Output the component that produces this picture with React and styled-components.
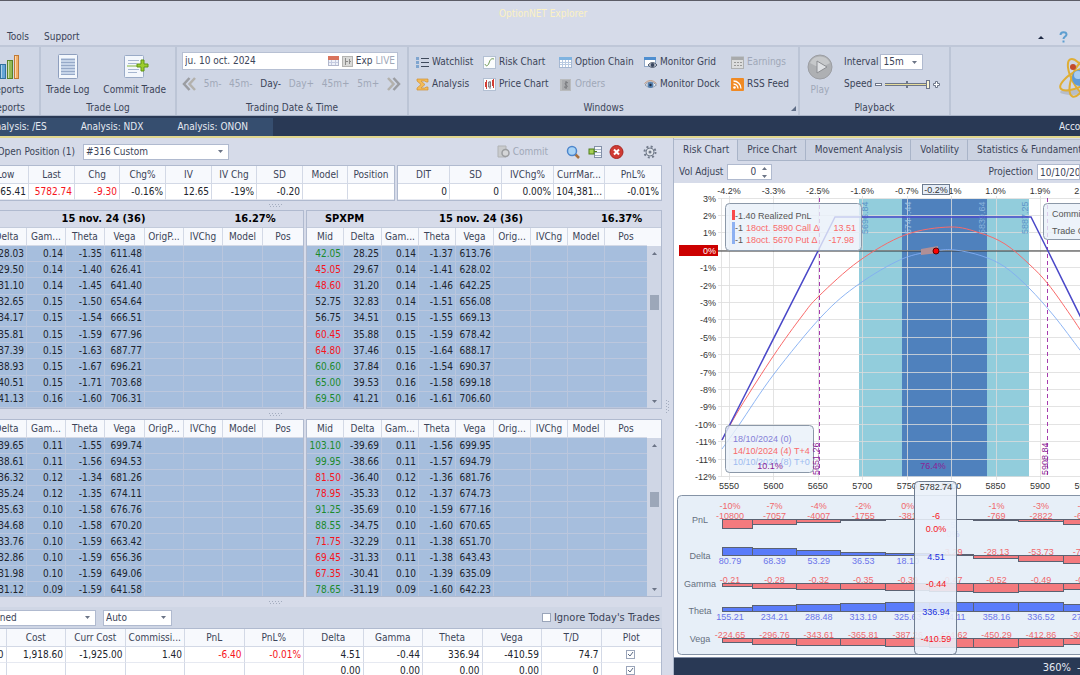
import React from "react";
import styled, { createGlobalStyle } from "styled-components";

const GlobalStyle = createGlobalStyle`
  * {
    box-sizing: border-box;
  }
  body {
    margin: 0;
    overflow: hidden;
    background: #d6dbe9;
    font-family: "DejaVu Sans Condensed", "Noto Sans", sans-serif;
    font-size: 10px;
    line-height: 14px;
    color: #3b4458;
  }
  button, input, select {
    font: inherit;
    color: inherit;
    margin: 0;
    padding: 0;
    border: none;
    background: none;
  }
`;

const Page = styled.div`
  display: flex;
  flex-direction: column;
  height: 100vh;
  overflow: hidden;
  white-space: nowrap;
`;

/* keeps the right end of its content in view when there is not enough room */
const LeftClip = styled.div`
  display: flex;
  flex: none;
  justify-content: flex-end;
  overflow: hidden;
  width: ${(props) => props.$width}px;
`;

/* ---------- title bar and menu ---------- */

const TitleBar = styled.header`
  flex: none;
  border-top: 1px solid #5c5c66;
  border-bottom: 2px solid #bfc7d8;
`;

const Title = styled.h1`
  margin: 0;
  padding: 6px 0 0 6px;
  height: 26px;
  text-align: center;
  font-size: 10px;
  font-weight: 400;
  color: #fbf1c3;
`;

const Menu = styled.nav`
  display: flex;
  align-items: center;
  gap: 15px;
  height: 18px;
  padding: 2px 12px 0 7px;
`;

const MenuButton = styled.button`
  display: flex;
  align-items: center;
`;

const Spacer = styled.div`
  flex: 1;
`;

/* ---------- ribbon ---------- */

const Ribbon = styled.div`
  display: flex;
  flex: none;
  height: 69px;
  background: #cfd6e5;
  border-bottom: 1px solid #a9b3c6;
`;

const Group = styled.section`
  display: flex;
  flex-direction: column;
  flex: none;
  width: ${(props) => props.$width}px;
  border-right: 2px solid #bcc5d6;
`;

const GroupBody = styled.div`
  display: flex;
  height: 54px;
  padding: ${(props) => props.$pad || "5px 5px 0"};
`;

const GroupLabel = styled.div`
  display: flex;
  justify-content: center;
  position: relative;
  height: 14px;
`;

const Launcher = styled.svg`
  position: absolute;
  right: 2px;
  bottom: 4px;
`;

const BigButton = styled.button`
  display: flex;
  flex-direction: column;
  align-items: center;
  flex: none;
  padding: 0 5px;
  color: ${(props) => (props.disabled ? "#a0a8b8" : "#3b4458")};
`;

const BigIcon = styled.span`
  display: flex;
  align-items: center;
  justify-content: center;
  height: 32px;
`;

const DateColumn = styled.div`
  display: flex;
  flex-direction: column;
  flex: 1;
`;

const DateRow = styled.div`
  display: flex;
  align-items: center;
  gap: 3px;
  height: 18px;
  width: 216px;
  padding: 0 2px;
  background: #fff;
  border: 1px solid #b7c0d3;
`;

const DateInput = styled.input`
  flex: 1;
  min-width: 0;
`;

const LiveButton = styled.button`
  color: ${(props) => (props.disabled ? "#a0a8b8" : "#3b4458")};
`;

const StepRow = styled.div`
  display: flex;
  align-items: center;
  justify-content: space-between;
  height: 27px;
  width: 219px;
`;

const StepButton = styled.button`
  display: flex;
  color: ${(props) => (props.disabled ? "#a0a8b8" : "#3b4458")};
`;

const WindowGrid = styled.div`
  display: grid;
  grid-template-columns: 67px 76px 85px 87px 66px;
  grid-template-rows: 22px 22px;
`;

const WindowButton = styled.button`
  display: flex;
  align-items: center;
  gap: 3px;
  color: ${(props) => (props.disabled ? "#a0a8b8" : "#3b4458")};
`;

const PlaybackRows = styled.div`
  display: flex;
  flex-direction: column;
  padding-left: 6px;
`;

const PlaybackRow = styled.div`
  display: flex;
  align-items: center;
  gap: ${(props) => props.$gap}px;
  height: 22px;
`;

const SpeedSlider = styled.input`
  appearance: none;
  width: 45px;
  height: 11px;
  background: linear-gradient(#6d7688, #6d7688) 0 4px / 100% 1px no-repeat,
    linear-gradient(#e6dc9b, #e6dc9b) 0 5px / 100% 1px no-repeat,
    linear-gradient(#6d7688, #6d7688) 0 6px / 100% 1px no-repeat,
    linear-gradient(#6d7688, #6d7688) 21px 2px / 2px 7px no-repeat;
  &::-webkit-slider-thumb {
    appearance: none;
    width: 4px;
    height: 9px;
    border: 1px solid #6d7688;
    background: #fbf6d3;
  }
`;

const LogoSlot = styled.div`
  flex: none;
  width: 22px;
  padding-top: 9px;
  overflow: hidden;
`;

/* ---------- select ---------- */

const SelectBox = styled.span`
  display: flex;
  align-items: center;
  flex: none;
  width: ${(props) => props.$width}px;
  height: 16px;
  background: #fff;
  border: 1px solid #b0bacf;
  svg {
    margin-left: -10px;
    pointer-events: none;
  }
`;

const SelectField = styled.select`
  appearance: none;
  width: 100%;
  padding: 0 14px 0 2px;
`;

const Select = ({ width, label, value }) => (
  <SelectBox $width={width}>
    <SelectField aria-label={label} defaultValue={value}>
      <option>{value}</option>
    </SelectField>
    <svg width="5" height="3">
      <path d="M0 0h5L2.500 3z" fill="#6b7486" />
    </svg>
  </SelectBox>
);

/* ---------- document tabs ---------- */

const DocumentBar = styled.nav`
  display: flex;
  align-items: flex-end;
  flex: none;
  height: 22px;
  background: #293955;
  border-bottom: 2px solid #e2d78d;
  color: #e6eaf2;
`;

const DocumentTab = styled.button`
  flex: none;
  height: 18px;
  padding: 0 25px 0 9px;
  background: #364e6f;
`;

const AccountButton = styled.button`
  width: 21px;
  height: 18px;
  overflow: hidden;
  text-align: left;
`;

/* ---------- workspace ---------- */

const Workspace = styled.main`
  display: flex;
  flex: 1;
  min-height: 0;
`;

const Positions = styled.section`
  display: flex;
  flex-direction: column;
  flex: none;
  width: 662px;
  overflow: hidden;
`;

const PositionBar = styled.div`
  display: flex;
  align-items: center;
  flex: none;
  height: 27px;
  gap: 8px;
`;

const ToolGroup = styled.div`
  display: flex;
  align-items: center;
  gap: 7px;
  padding-right: 5px;
`;

const ToolButton = styled.button`
  display: flex;
  align-items: center;
  gap: 3px;
  padding-right: ${(props) => props.$space || 0}px;
  color: ${(props) => (props.disabled ? "#a0a8b8" : "#3b4458")};
`;

const Splitter = styled.div`
  display: flex;
  align-items: center;
  justify-content: center;
  flex: none;
  height: ${(props) => props.$height || 10}px;
  padding-right: 112px;
`;

const PanelSplitter = styled.div`
  display: flex;
  align-items: center;
  justify-content: center;
  flex: none;
  width: 11px;
`;

const TablePair = styled.div`
  display: flex;
  flex: none;
  gap: 2px;
`;

const Frame = styled.div`
  display: flex;
  flex-direction: column;
  flex: none;
  width: ${(props) => props.$width}px;
  ${(props) => (props.$height ? `height: ${props.$height}px;` : "")}
  overflow: hidden;
  border: 1px solid #b0bacf;
  ${(props) => (props.$cut ? "border-left: none;" : "")}
  background: ${(props) => props.$bg || "#fff"};
`;

const Grid = styled.table`
  flex: none;
  width: ${(props) => props.$width}px;
  table-layout: fixed;
  border-collapse: separate;
  border-spacing: 0;
`;

const HeadCell = styled.th`
  height: 18px;
  padding: 0;
  overflow: hidden;
  text-align: center;
  font-weight: 400;
  background: #f7f9fd;
  border-right: 1px solid #d3d9e6;
  border-bottom: 1px solid #d3d9e6;
  &:last-child {
    border-right: none;
  }
`;

const Cell = styled.td`
  height: 16px;
  padding: 0 2px 0 0;
  overflow: hidden;
  text-align: right;
  color: ${(props) => props.$color || "#20242c"};
  background: ${(props) => (props.$picked ? "#a6bedd" : "#fff")};
  border-right: 1px solid ${(props) => (props.$picked ? "#b9c6dd" : "#d3d9e6")};
  border-bottom: 1px solid ${(props) => (props.$picked ? "#bcc7dd" : "#e6e9f1")};
  &:last-child {
    border-right: none;
  }
`;

const ExpiryTitle = styled.div`
  display: grid;
  grid-template-columns: ${(props) => props.$columns};
  align-items: center;
  flex: none;
  height: 17px;
  font-size: 11px;
  font-weight: 700;
  text-align: center;
  color: #000;
  background: #d6dbe9;
  border-bottom: 1px solid #c3cbdb;
`;

const GridBody = styled.div`
  display: flex;
  justify-content: ${(props) => (props.$cut ? "flex-end" : "flex-start")};
  flex: 1;
  min-height: 0;
`;

const ScrollTrack = styled.div`
  display: flex;
  flex-direction: column;
  align-items: center;
  flex: 1;
  background: #cfd6e5;
`;

const ScrollHead = styled.div`
  width: 100%;
  height: 18px;
  background: #f7f9fd;
`;

const ScrollRoom = styled.div`
  flex: ${(props) => props.$grow};
`;

const ScrollThumb = styled.div`
  width: 9px;
  height: 15px;
  background: #9ca7b9;
`;

const ArrowSlot = styled.div`
  display: flex;
  align-items: center;
  height: 14px;
`;

const SummaryBar = styled.div`
  display: flex;
  align-items: center;
  gap: 7px;
  flex: none;
  height: 21px;
  padding-right: 2px;
  background: #cfd6e5;
`;

const CheckLabel = styled.label`
  display: flex;
  align-items: center;
  gap: 3px;
  font-size: 11px;
`;

const CheckBox = styled.input`
  appearance: none;
  flex: none;
  width: 9px;
  height: 9px;
  background: #fff;
  border: 1px solid #9aa5ba;
  vertical-align: middle;
`;

const PlotCheck = styled.span`
  display: flex;
  justify-content: center;
  align-items: center;
  svg {
    width: 7px;
    margin-left: -8px;
    pointer-events: none;
  }
`;

/* ---------- risk panel ---------- */

const RiskPanel = styled.section`
  display: flex;
  flex-direction: column;
  flex: 1;
  min-width: 0;
  overflow: hidden;
  border-left: 1px solid #aab5c9;
`;

const TabList = styled.div`
  display: flex;
  flex: none;
  height: 23px;
  padding-top: 1px;
`;

const ChartTab = styled.button`
  flex: none;
  padding: 0 8px 0 9px;
  background: ${(props) => (props.$active ? "#d6dbe9" : "#cbd2e1")};
  border-right: 1px solid #a9b4c8;
  border-top: 1px solid #b7c0d2;
  border-bottom: 1px solid ${(props) => (props.$active ? "#d6dbe9" : "#a9b4c8")};
`;

const RiskBar = styled.div`
  display: flex;
  align-items: center;
  flex: none;
  gap: 4px;
  height: 22px;
  padding-left: 5px;
`;

const Spin = styled.span`
  display: flex;
  align-items: center;
  justify-content: space-between;
  width: 45px;
  height: 16px;
  padding-right: 4px;
  background: #fff;
  border: 1px solid #b0bacf;
`;

const SpinInput = styled.input`
  width: 28px;
  text-align: right;
`;

const ProjectionInput = styled.input`
  width: 43px;
  height: 16px;
  padding-left: 2px;
  background: #fff;
  border: 1px solid #b0bacf;
`;

const ChartArea = styled.div`
  flex: 1;
  min-height: 0;
  overflow: hidden;
  background: #fff;
`;

const ChartSvg = styled.svg`
  display: block;
  width: 100%;
  height: 100%;
  font-family: "Liberation Sans", Arial, sans-serif;
  font-size: 9px;
`;

const StatusBar = styled.footer`
  display: flex;
  align-items: center;
  justify-content: flex-end;
  flex: none;
  gap: 6px;
  height: 18px;
  padding-top: 2px;
  color: #e6eaf2;
  background: #293955;
  border-top: 1px solid #8390a8;
  font-size: 11px;
`;

const ZoomOut = styled.button`
  width: 3px;
  overflow: hidden;
`;

/* ---------- icons ---------- */

const PageIcon = ({ children }) => (
  <svg width="28" height="28">
    <rect x="4.500" y="1.500" width="19" height="24" rx="1" fill="#f3f7fc" stroke="#8e9fbe" />
    <rect x="7" y="5" width="14" height="17" fill="#c6d4e8" />
    <path d="M7 6.500h14M7 9.500h14M7 12.500h14M7 15.500h14M7 18.500h14M7 21.500h14" stroke="#96a9c8" />
    {children}
  </svg>
);

const CommitTradeIcon = () => (
  <svg width="28" height="28">
    <rect x="3.500" y="2.500" width="19" height="22" rx="1" fill="#f3f7fc" stroke="#9aabc7" />
    <path d="M7 7.500h11M7 10.500h9M7 16.500h11M7 19.500h9" stroke="#a6b6d0" />
    <path d="M6 13h11" stroke="#85b83a" />
    <path d="M20 7h3v4h4v3h-4v4h-3v-4h-4v-3h4z" fill="#9ccc2c" stroke="#5f9417" />
  </svg>
);

const BarsIcon = () => (
  <svg width="34" height="26">
    <rect x="1.500" y="13.500" width="5" height="11" fill="#d8574a" stroke="#a33b32" />
    <rect x="10.500" y="10.500" width="5" height="14" fill="#63a5d6" stroke="#32729f" />
    <rect x="17.500" y="6.500" width="5" height="18" fill="#93b956" stroke="#58822b" />
    <rect x="24.500" y="1.500" width="4" height="23" fill="#f4b26b" stroke="#c07a35" />
    <path d="M11.500 11v13M18.500 7v17M25.500 2v22" stroke="#fff" strokeOpacity=".5" />
  </svg>
);

const PlayIcon = () => (
  <svg width="26" height="26">
    <circle cx="13" cy="13" r="12" fill="#aeb0b3" stroke="#9c9ea3" />
    <path d="M3 9a11 11 0 0 1 20 0q-10 7-20 0z" fill="#c6c8ca" />
    <path d="M10 7l10 6-10 6z" fill="#dfe1e4" stroke="#8c8e92" />
  </svg>
);

const ChevronsIcon = ({ flip }) => (
  <svg width="14" height="14" viewBox="0 0 14 14">
    <g
      fill="none"
      stroke="#9b9da2"
      strokeWidth="2.500"
      transform={flip ? "matrix(-1 0 0 1 14 0)" : undefined}
    >
      <path d="M7.500 1L2 7l5.500 6" />
      <path d="M13 1L7.500 7 13 13" stroke="#b3b1ac" />
    </g>
  </svg>
);

const CalendarIcon = () => (
  <svg width="11" height="10">
    <rect x=".5" y=".5" width="10" height="9" fill="#eef1f8" stroke="#b1b7cc" />
    <path d="M0 0h11v4H0z" fill="#d9735c" />
    <path d="M1 6.500h9M3.500 4v5M7.500 4v5" stroke="#c5cbe0" />
  </svg>
);

const SessionIcon = () => (
  <svg width="11" height="11">
    <rect x=".5" y=".5" width="10" height="10" fill="#d9d9d7" stroke="#b4b4b2" />
    <path d="M3.500 2v7M3.500 5.500H6M7.500 3v5M7 5.500h2" stroke="#8c8c8a" />
  </svg>
);

const drawings = {
  list: (
    <>
      <path d="M0 1h3v3H0zM0 5h3v3H0zM0 9h3v3H0z" fill="#7fa5cf" />
      <path d="M5 2.500h8M5 6.500h8M5 10.500h8" stroke="#3f4a5c" />
    </>
  ),
  sigma: (
    <path
      d="M1 1h11v3h-2l-1-1H5l4 3.500L5 10h4l1-1h2v3H1v-2l4-3.500L1 3z"
      fill="#f3bb55"
      stroke="#cf8f35"
      strokeWidth=".7"
    />
  ),
  risk: (
    <>
      <rect x=".5" y=".5" width="12" height="12" fill="#fbfcfd" stroke="#b3c0d3" />
      <path d="M2 8c1 3 3 2 4-1s2-5 5-4" fill="none" stroke="#6f9a58" />
    </>
  ),
  price: (
    <>
      <rect x=".5" y=".5" width="12" height="12" fill="#fbfcfd" stroke="#b3c0d3" />
      <path d="M2 4h2v5H2zM9 2h2v6H9z" fill="#d23d34" />
      <path d="M3.500 2v9M10.500 1v9" stroke="#d23d34" />
      <path d="M5.500 4h2v5h-2zM7 3v8" fill="#fff" stroke="#6b6b70" strokeWidth=".8" />
    </>
  ),
  chain: (
    <>
      <rect x=".5" y="1.500" width="12" height="10" fill="#fff" stroke="#a6b8d2" />
      <path d="M0 1h13v3H0z" fill="#7fb3e0" />
      <path d="M1 6.500h11M1 8.500h11M3.500 4v7M6.500 4v7M9.500 4v7" stroke="#b9cbe2" />
    </>
  ),
  orders: (
    <>
      <path d="M1 1h11v12H1z" fill="#b9bbbd" />
      <path d="M3 2h8v10H3z" fill="#a9abae" />
      <path d="M9 5C7 3 5 6 7 7s2 3-2 2M7 3v8" fill="none" stroke="#77797c" />
    </>
  ),
  monitor: (
    <>
      <rect x=".5" y="1.500" width="11" height="9" fill="#fff" stroke="#8fa7c6" />
      <path d="M0 1h12v3H0z" fill="#4f8fd0" />
      <path d="M4 9q4.500-5 9 0-4.500 5-9 0z" fill="#d6dce6" stroke="#4a5568" />
      <circle cx="8.500" cy="9" r="2" fill="#39465f" />
    </>
  ),
  eye: (
    <>
      <path d="M1 7q5.500-6 11.500 0Q6.500 12 1 7z" fill="#eff3f8" stroke="#8d97a7" />
      <path d="M.5 5.500q6-6 12 0" fill="none" stroke="#c29473" />
      <circle cx="6.500" cy="7" r="3" fill="#5480b0" />
      <circle cx="6.500" cy="7" r="1.200" fill="#1d2a3e" />
    </>
  ),
  earnings: (
    <>
      <rect x=".5" y="1" width="12" height="11.500" fill="#dcdddd" stroke="#aeb0b1" />
      <path d="M1 1h11v3H1z" fill="#a8aaab" />
      <path d="M3 6.500h8M3 9.500h8" stroke="#999" strokeDasharray="2 1" />
    </>
  ),
  rss: (
    <>
      <rect width="13" height="13" rx="1" fill="#f08a24" />
      <circle cx="3.500" cy="9.500" r="1.300" fill="#fff" />
      <path d="M2.500 6a4.500 4.500 0 0 1 4.500 4.500M2.500 3a7.500 7.500 0 0 1 7.500 7.500" fill="none" stroke="#fff" strokeWidth="1.300" />
    </>
  ),
};

const WindowIcon = ({ name }) => (
  <svg width="13" height="13" viewBox="0 0 13 13">
    {drawings[name]}
  </svg>
);

const AtomLogo = () => (
  <svg width="50" height="44">
    <ellipse cx="14" cy="36" rx="12" ry="3" fill="#b7bdc9" />
    <g fill="none" stroke="#dfae35" strokeWidth="2">
      <ellipse cx="22" cy="22" rx="8" ry="21" transform="rotate(-28 22 22)" />
      <ellipse cx="22" cy="22" rx="8" ry="22" transform="rotate(62 22 22)" />
      <ellipse cx="22" cy="22" rx="8" ry="20" transform="rotate(22 22 22)" />
    </g>
    <circle cx="22" cy="22" r="8" fill="#5d9bd8" />
    <circle cx="20" cy="19" r="4" fill="#a9cdf0" />
    <circle cx="15" cy="11" r="3" fill="#c34a2b" />
  </svg>
);

const Dots = ({ vertical }) => (
  <svg width={vertical ? 5 : 13} height={vertical ? 13 : 5}>
    <path
      d={vertical ? "M1.500 0v13M3.500 1v12" : "M0 1.500h13M1 3.500h12"}
      stroke="#a4adbf"
      strokeDasharray="1 2"
    />
  </svg>
);

/* ---------- data ---------- */

const RED = "#f6141c";
const GREEN = "#1c8a2c";

const windowButtons = [
  ["list", "Watchlist"],
  ["risk", "Risk Chart"],
  ["chain", "Option Chain"],
  ["monitor", "Monitor Grid"],
  ["earnings", "Earnings", true],
  ["sigma", "Analysis"],
  ["price", "Price Chart"],
  ["orders", "Orders", true],
  ["eye", "Monitor Dock"],
  ["rss", "RSS Feed"],
];

const leftColumns = [
  ["Delta", 40],
  ["Gam...", 39],
  ["Theta", 39],
  ["Vega", 40],
  ["OrigP...", 39],
  ["IVChg", 39],
  ["Model", 40],
  ["Pos", 40],
];

const rightColumns = [
  ["Mid", 37],
  ["Delta", 38],
  ["Gam...", 37],
  ["Theta", 37],
  ["Vega", 38],
  ["Orig...", 37],
  ["IVChg", 37],
  ["Model", 37],
  ["Pos", 42],
];

const callsLeft = [
  ["28.03", "0.14", "-1.35", "611.48"],
  ["29.50", "0.14", "-1.40", "626.41"],
  ["31.10", "0.14", "-1.45", "641.40"],
  ["32.65", "0.15", "-1.50", "654.64"],
  ["34.17", "0.15", "-1.54", "666.51"],
  ["35.81", "0.15", "-1.59", "677.96"],
  ["37.39", "0.15", "-1.63", "687.77"],
  ["38.93", "0.15", "-1.67", "696.21"],
  ["40.51", "0.15", "-1.71", "703.68"],
  ["41.13", "0.16", "-1.60", "706.31"],
];

const callsRight = [
  ["42.05", "28.25", "0.14", "-1.37", "613.76", GREEN],
  ["45.05", "29.67", "0.14", "-1.41", "628.02", RED],
  ["48.60", "31.20", "0.14", "-1.46", "642.25", RED],
  ["52.75", "32.83", "0.14", "-1.51", "656.08"],
  ["56.75", "34.51", "0.15", "-1.55", "669.13"],
  ["60.45", "35.88", "0.15", "-1.59", "678.42", RED],
  ["64.80", "37.46", "0.15", "-1.64", "688.17", RED],
  ["60.60", "37.84", "0.16", "-1.54", "690.37", GREEN],
  ["65.00", "39.53", "0.16", "-1.58", "699.18", GREEN],
  ["69.50", "41.21", "0.16", "-1.61", "706.60", GREEN],
];

const putsLeft = [
  ["-39.65", "0.11", "-1.55", "699.74"],
  ["-38.61", "0.11", "-1.56", "694.53"],
  ["-36.32", "0.12", "-1.34", "681.26"],
  ["-35.24", "0.12", "-1.35", "674.11"],
  ["-35.63", "0.10", "-1.58", "676.76"],
  ["-34.68", "0.10", "-1.58", "670.20"],
  ["-33.76", "0.10", "-1.59", "663.42"],
  ["-32.86", "0.10", "-1.59", "656.36"],
  ["-31.98", "0.10", "-1.59", "649.06"],
  ["-31.12", "0.09", "-1.59", "641.58"],
];

const putsRight = [
  ["103.10", "-39.69", "0.11", "-1.56", "699.95", GREEN],
  ["99.95", "-38.66", "0.11", "-1.57", "694.79", GREEN],
  ["81.50", "-36.40", "0.12", "-1.36", "681.76", RED],
  ["78.95", "-35.33", "0.12", "-1.37", "674.73", RED],
  ["91.25", "-35.69", "0.10", "-1.59", "677.16", GREEN],
  ["88.55", "-34.75", "0.10", "-1.60", "670.65", GREEN],
  ["71.75", "-32.29", "0.11", "-1.38", "651.70", RED],
  ["69.45", "-31.33", "0.11", "-1.38", "643.43", RED],
  ["67.35", "-30.41", "0.10", "-1.39", "635.09", RED],
  ["78.65", "-31.19", "0.09", "-1.60", "642.23", GREEN],
];

const quoteColumns = [
  ["Low", 46, "5765.41"],
  ["Last", 46, "5782.74", RED],
  ["Chg", 45, "-9.30", RED],
  ["Chg%", 46, "-0.16%"],
  ["IV", 46, "12.65"],
  ["IV Chg", 45, "-19%"],
  ["SD", 46, "-0.20"],
  ["Model", 45, ""],
  ["Position", 46, ""],
];

const tradeColumns = [
  ["DIT", 52, "0"],
  ["SD", 52, "0"],
  ["IVChg%", 52, "0.00%"],
  ["CurrMar...", 51, "104,381..."],
  ["PnL%", 56, "-0.01%"],
];

const summaryHeads = [
  "Open",
  "Cost",
  "Curr Cost",
  "Commissi...",
  "PnL",
  "PnL%",
  "Delta",
  "Gamma",
  "Theta",
  "Vega",
  "T/D",
];

const summaryRows = [
  ["0.00", "1,918.60", "-1,925.00", "1.40", "-6.40", "-0.01%", "4.51", "-0.44", "336.94", "-410.59", "74.7"],
  ["", "", "", "", "", "", "0.00", "0.00", "0.00", "0.00", "0"],
];

const priceTicks = [5550, 5600, 5650, 5700, 5750, 5800, 5850, 5900, 5950];
const moveTicks = ["-4.2%", "-3.3%", "-2.5%", "-1.6%", "-0.7%", "0.1%", "1.0%", "1.9%", "2.8%"];
const pnlTicks = [3, 2, 1, 0, -1, -2, -3, -4, -5, -6, -7, -8, -9, -10, -11, -11, -12];

const nextExpiry = [
  [48, 257], [66, 225], [100, 172], [128, 133], [145, 113], [185, 78],
  [231, 52], [276, 44], [306, 50], [331, 61], [355, 81], [374, 101],
  [397, 133], [420, 168],
];
const today = [
  [48, 266], [65, 242], [100, 191], [148, 133], [185, 101], [228, 76],
  [261, 68], [281, 67], [308, 73], [331, 84], [355, 105], [380, 133],
  [406, 167], [420, 185],
];

const greeks = [
  {
    name: "PnL",
    base: 336,
    labelY: 340,
    textY: 336,
    bars: [9, 5, 3, 1, 0, 0, 1, 2, 5],
    values: ["-10800", "-7057", "-4007", "-1755", "-381", "", "-769", "-2822", "-6120"],
  },
  {
    name: "Delta",
    base: 372,
    labelY: 376,
    textY: 381,
    bars: [-8, -7, -5, -3, -2, -1, 3, 6, 8],
    values: ["80.79", "68.39", "53.29", "36.53", "18.10", "-3.29", "-28.13", "-53.73", "-76.40"],
  },
  {
    name: "Gamma",
    base: 400,
    labelY: 404,
    textY: 400,
    bars: [3, 5, 6, 6, 7, 8, 9, 8, 6],
    values: ["-0.21", "-0.28", "-0.32", "-0.35", "-0.39", "-0.47", "-0.52", "-0.49", "-0.41"],
  },
  {
    name: "Theta",
    base: 428,
    labelY: 431,
    textY: 437,
    bars: [-4, -6, -7, -8, -9, -9, -9, -9, -7],
    values: ["155.21", "234.21", "288.48", "313.19", "325.63", "344.11", "358.16", "336.52", "278.20"],
  },
  {
    name: "Vega",
    base: 455,
    labelY: 459,
    textY: 455,
    bars: [4, 6, 7, 7, 8, 9, 9, 8, 6],
    values: ["-224.65", "-296.76", "-343.61", "-365.81", "-387.26", "-424.62", "-450.29", "-412.86", "-305.10"],
  },
];
const pnlPercents = ["-10%", "-7%", "-4%", "-2%", "0%", "", "-1%", "-3%", "-6%"];
const barEdges = [48, 78, 122, 166, 211, 255, 299, 344, 389, 433];

const priceX = (price) => 55 + ((price - 5550) * 311) / 350;
const pnlY = (index) => 15.5 + index * 17.4;

/* smooth line through the points (Catmull-Rom as cubic beziers) */
const curve = (points) => {
  let d = `M${points[0].join(" ")}`;
  for (let i = 0; i < points.length - 1; i++) {
    const p0 = points[i - 1] || points[i];
    const p1 = points[i];
    const p2 = points[i + 1];
    const p3 = points[i + 2] || p2;
    d += `C${p1[0] + (p2[0] - p0[0]) / 6} ${p1[1] + (p2[1] - p0[1]) / 6} ${
      p2[0] - (p3[0] - p1[0]) / 6
    } ${p2[1] - (p3[1] - p1[1]) / 6} ${p2[0]} ${p2[1]}`;
  }
  return d;
};

/* ---------- parts ---------- */

const FactTable = ({ width, columns, cut }) => {
  const total = columns.reduce((sum, column) => sum + column[1], 0);
  return (
    <Frame $width={width} $cut={cut}>
      <GridBody $cut={cut}>
        <Grid $width={total}>
          <colgroup>
            {columns.map((column) => (
              <col key={column[0]} width={column[1]} />
            ))}
          </colgroup>
          <thead>
            <tr>
              {columns.map((column) => (
                <HeadCell key={column[0]}>{column[0]}</HeadCell>
              ))}
            </tr>
          </thead>
          <tbody>
            <tr>
              {columns.map((column) => (
                <Cell key={column[0]} $color={column[3]}>
                  {column[2]}
                </Cell>
              ))}
            </tr>
          </tbody>
        </Grid>
      </GridBody>
    </Frame>
  );
};

const StrikeGrid = ({ columns, rows }) => {
  const total = columns.reduce((sum, column) => sum + column[1], 0);
  return (
    <Grid $width={total}>
      <colgroup>
        {columns.map((column) => (
          <col key={column[0]} width={column[1]} />
        ))}
      </colgroup>
      <thead>
        <tr>
          {columns.map((column) => (
            <HeadCell key={column[0]}>{column[0]}</HeadCell>
          ))}
        </tr>
      </thead>
      <tbody>
        {rows.map((row, r) => (
          <tr key={r}>
            {columns.map((column, c) => (
              <Cell key={column[0]} $picked $color={c === 0 ? row[5] : undefined}>
                {c < 5 ? row[c] : ""}
              </Cell>
            ))}
          </tr>
        ))}
      </tbody>
    </Grid>
  );
};

const Scroll = ({ before, after }) => (
  <ScrollTrack>
    <ScrollHead />
    <ArrowSlot>
      <svg width="5" height="3">
        <path d="M0 3h5L2.500 0z" fill="#6b7486" />
      </svg>
    </ArrowSlot>
    <ScrollRoom $grow={before} />
    <ScrollThumb />
    <ScrollRoom $grow={after} />
    <ArrowSlot>
      <svg width="5" height="3">
        <path d="M0 0h5L2.500 3z" fill="#6b7486" />
      </svg>
    </ArrowSlot>
  </ScrollTrack>
);

const RibbonBar = () => (
  <Ribbon>
    <Group $width={41}>
      <LeftClip $width={39}>
        <GroupBody $pad="4px 10px 0 0">
          <BigButton>
            <BigIcon>
              <BarsIcon />
            </BigIcon>
            Reports
          </BigButton>
        </GroupBody>
      </LeftClip>
      <LeftClip $width={25}>Reports</LeftClip>
    </Group>
    <Group $width={136}>
      <GroupBody $pad="4px 0 0">
        <BigButton>
          <BigIcon>
            <PageIcon />
          </BigIcon>
          Trade Log
        </BigButton>
        <Spacer />
        <BigButton>
          <BigIcon>
            <CommitTradeIcon />
          </BigIcon>
          Commit Trade
        </BigButton>
        <Spacer />
      </GroupBody>
      <GroupLabel>Trade Log</GroupLabel>
    </Group>
    <Group $width={232}>
      <GroupBody>
        <DateColumn>
          <DateRow>
            <DateInput aria-label="Trading date" defaultValue="ju. 10 oct. 2024" />
            <CalendarIcon />
            <SessionIcon />
            <LiveButton>Exp</LiveButton>
            <LiveButton disabled>LIVE</LiveButton>
          </DateRow>
          <StepRow>
            <StepButton aria-label="Back">
              <ChevronsIcon />
            </StepButton>
            <StepButton disabled>5m-</StepButton>
            <StepButton disabled>45m-</StepButton>
            <StepButton>Day-</StepButton>
            <StepButton disabled>Day+</StepButton>
            <StepButton disabled>45m+</StepButton>
            <StepButton disabled>5m+</StepButton>
            <StepButton aria-label="Forward">
              <ChevronsIcon flip />
            </StepButton>
          </StepRow>
        </DateColumn>
      </GroupBody>
      <GroupLabel>Trading Date &amp; Time</GroupLabel>
    </Group>
    <Group $width={391}>
      <GroupBody $pad="4px 7px 0">
        <WindowGrid>
          {windowButtons.map(([icon, label, disabled]) => (
            <WindowButton key={label} disabled={disabled}>
              <WindowIcon name={icon} />
              {label}
            </WindowButton>
          ))}
        </WindowGrid>
      </GroupBody>
      <GroupLabel>
        Windows
        <Launcher width="5" height="5">
          <path d="M5 0v5H0z" fill="#5f6d86" />
        </Launcher>
      </GroupLabel>
    </Group>
    <Group $width={151}>
      <GroupBody $pad="4px 2px 0">
        <BigButton disabled>
          <BigIcon>
            <PlayIcon />
          </BigIcon>
          Play
        </BigButton>
        <PlaybackRows>
          <PlaybackRow $gap={2}>
            Interval
            <Select width={43} label="Interval" value="15m" />
          </PlaybackRow>
          <PlaybackRow $gap={3}>
            <label htmlFor="speed">Speed</label>
            <svg width="7" height="3">
              <rect x=".5" y=".5" width="6" height="2" fill="#fff" stroke="#6d7688" />
            </svg>
            <SpeedSlider id="speed" type="range" defaultValue="100" />
            <svg width="7" height="7">
              <path
                d="M2.500.5h2v2h2v2h-2v2h-2v-2h-2v-2h2z"
                fill="#fff"
                stroke="#6d7688"
              />
            </svg>
          </PlaybackRow>
        </PlaybackRows>
      </GroupBody>
      <GroupLabel>Playback</GroupLabel>
    </Group>
    <Spacer />
    <LogoSlot>
      <AtomLogo />
    </LogoSlot>
  </Ribbon>
);

const PositionTools = () => (
  <ToolGroup>
    <ToolButton disabled $space={11}>
      <svg width="13" height="13">
        <path d="M1 1h8v11H1z" fill="#c9cbcd" stroke="#b1b3b5" />
        <circle cx="8.500" cy="8" r="3.500" fill="#d5d6d8" stroke="#9b9da0" strokeWidth="1.500" />
      </svg>
      Commit
    </ToolButton>
    <ToolButton aria-label="Search">
      <svg width="15" height="14">
        <path d="M9 9l4 4" stroke="#a8703d" strokeWidth="2.500" />
        <circle cx="6" cy="6" r="4.500" fill="#a9d3f5" stroke="#4d86cc" strokeWidth="1.500" />
      </svg>
    </ToolButton>
    <ToolButton aria-label="Layout">
      <svg width="14" height="12">
        <rect x="6.500" y=".5" width="7" height="11" fill="#f4f7fb" stroke="#8390a8" />
        <path d="M7 3.500h6M7 6.500h6M7 9.500h6" stroke="#a5b1c6" />
        <rect x="1" y="3" width="5" height="5" fill="#a6cf52" stroke="#4f7f1c" />
        <path d="M6 5.500h3" stroke="#4f7f1c" />
      </svg>
    </ToolButton>
    <ToolButton aria-label="Close position" $space={12}>
      <svg width="15" height="14">
        <circle cx="7.500" cy="7" r="6.500" fill="#cf3a33" stroke="#a92721" />
        <path d="M5 4.500l5 5M10 4.500l-5 5" stroke="#fff" strokeWidth="2" />
      </svg>
    </ToolButton>
    <ToolButton aria-label="Settings">
      <svg width="14" height="14">
        <circle cx="7" cy="7" r="5.500" fill="none" stroke="#727b8b" strokeWidth="2" strokeDasharray="2 2.320" />
        <circle cx="7" cy="7" r="4" fill="#dfe3ea" stroke="#727b8b" />
        <circle cx="7" cy="7" r="1.500" fill="#727b8b" />
      </svg>
    </ToolButton>
  </ToolGroup>
);

const SummaryTable = () => (
  <Frame $width={662} $cut>
    <GridBody $cut>
      <Grid $width={714}>
        <thead>
          <tr>
            {summaryHeads.map((head) => (
              <HeadCell key={head}>{head}</HeadCell>
            ))}
            <HeadCell>Plot</HeadCell>
          </tr>
        </thead>
        <tbody>
          {summaryRows.map((row, r) => (
            <tr key={r}>
              {row.map((value, c) => (
                <Cell key={c} $color={c === 4 || c === 5 ? RED : undefined}>
                  {value}
                </Cell>
              ))}
              <Cell>
                <PlotCheck>
                  <CheckBox type="checkbox" defaultChecked aria-label="Plot" />
                  <svg viewBox="0 0 7 7" height="7">
                    <path d="M1 3l2 2 3-4" fill="none" stroke="#5d6b84" />
                  </svg>
                </PlotCheck>
              </Cell>
            </tr>
          ))}
        </tbody>
      </Grid>
    </GridBody>
  </Frame>
);

const GreekRow = ({ greek }) => (
  <g>
    <text x="26" y={greek.labelY} textAnchor="middle" fill="#66707f">
      {greek.name}
    </text>
    {greek.bars.map((height, i) =>
      height === 0 ? null : (
        <rect
          key={i}
          x={barEdges[i] + 0.5}
          y={greek.base + 0.5 + Math.min(height, 0)}
          width={barEdges[i + 1] - barEdges[i]}
          height={Math.abs(height)}
          fill={height > 0 ? "#f47a7e" : "#5a7cfa"}
          stroke="#5b6272"
        />
      )
    )}
    <path d={`M48 ${greek.base + 0.5}H1000`} stroke="#5b6272" />
    {greek.values.map((value, i) => (
      <text
        key={i}
        x={priceX(priceTicks[i]) + 1}
        y={value.startsWith("-") ? greek.base : greek.textY}
        textAnchor="middle"
        fill={value.startsWith("-") ? "#f0686c" : "#6a74ea"}
      >
        {value}
      </text>
    ))}
  </g>
);

const RiskChart = () => (
  <ChartSvg>
    <rect x="185" y="16" width="170" height="278" fill="#92cddc" />
    <rect x="228" y="16" width="85" height="278" fill="#4f81bd" />
    <g stroke="#dcdcdc" strokeOpacity=".8">
      {priceTicks.map((tick) => (
        <path key={tick} d={`M${Math.round(priceX(tick)) + 0.5} 13V297`} />
      ))}
      {pnlTicks.map((tick, i) => (
        <path key={i} d={`M44 ${Math.round(pnlY(i)) - 0.5}H1000`} />
      ))}
      <path d="M47.500 15v279" />
    </g>
    <g fill="#333" textAnchor="middle">
      {priceTicks.map((tick, i) => (
        <g key={tick}>
          <text x={priceX(tick)} y="11">
            {moveTicks[i]}
          </text>
          <text x={priceX(tick)} y="306">
            {tick}
          </text>
        </g>
      ))}
    </g>
    <rect x="5" y="62" width="39" height="11" fill="#c00" />
    <g textAnchor="end">
      {pnlTicks.map((tick, i) => (
        <text key={i} x="42" y={pnlY(i) + 3} fill={tick === 0 ? "#fff" : "#333"}>
          {tick}%
        </text>
      ))}
    </g>
    <path d="M44 68H1000" stroke="#333" />
    <g stroke="#a63cae" strokeDasharray="4 3">
      <path d="M145.500 15v279M373.500 15v279" />
    </g>
    <g fill="#5b94c8">
      <text transform="translate(194 51) rotate(-90)">5696.84</text>
      <text transform="translate(237 51) rotate(-90)" fill="#9cc3e4">5744.44</text>
      <text transform="translate(311 51) rotate(-90)" fill="#8ab4dc">5839.64</text>
      <text transform="translate(354 51) rotate(-90)">5887.25</text>
    </g>
    <path d={curve(today)} fill="none" stroke="#82adf2" strokeOpacity=".9" />
    <path d={curve(nextExpiry)} fill="none" stroke="#f96a6a" />
    <path d="M48 257L144 68l17-34h196l17 34 46 93" fill="none" stroke="#4a48c8" strokeWidth="1.500" />
    <path d="M247 66l17-3v7l-17 2z" fill="#b08f96" />
    <circle cx="262" cy="68" r="3" fill="#f00" stroke="#5c0000" />

    <g fill="#e9f0f9" fillOpacity=".8" stroke="#8b98a8">
      <rect x="51.500" y="20.500" width="136" height="47" rx="4" />
      <rect x="51.500" y="242.500" width="88" height="47" rx="4" />
      <rect x="369.500" y="20.500" width="120" height="36" rx="4" />
    </g>
    <path d="M58 27h3v10h-3z" fill="#fa4a4a" />
    <path d="M58 39h3v22h-3z" fill="#8db1f2" />
    <text x="61" y="36" fill="#555">-1.40 Realized PnL</text>
    <text x="61" y="48" fill="#555">-1</text>
    <text x="72" y="48" fill="#f96a6a">18oct. 5890 Call Δ</text>
    <text x="182" y="48" textAnchor="end" fill="#f96a6a">13.51</text>
    <text x="61" y="60" fill="#555">-1</text>
    <text x="72" y="60" fill="#f96a6a">18oct. 5670 Put Δ</text>
    <text x="180" y="60" textAnchor="end" fill="#f96a6a">-17.98</text>
    <text x="59" y="259" fill="#8580d8">18/10/2024 (0)</text>
    <text x="59" y="271" fill="#f96a6a">14/10/2024 (4) T+4</text>
    <text x="59" y="282" fill="#9dbbf0">10/10/2024 (8) T+0</text>
    <text x="378" y="34" fill="#555">Commissions</text>
    <text x="378" y="51" fill="#555">Trade Costs</text>
    <g fill="#8b1f96">
      <text x="96" y="286" textAnchor="middle">10.1%</text>
      <text x="259" y="286" textAnchor="middle">76.4%</text>
      <text transform="translate(145 292) rotate(-90)">5651.26</text>
      <text transform="translate(374 292) rotate(-90)">5908.84</text>
    </g>
    <rect x="248.500" y="1.500" width="27" height="10" fill="#e6edf7" stroke="#6e7c90" />
    <text x="262" y="10" textAnchor="middle" fill="#333">-0.2%</text>

    <rect x="3.500" y="312.500" width="1000" height="159" rx="4" fill="#e7eff8" stroke="#8593a6" />
    {pnlPercents.map((value, i) => (
      <text key={i} x={priceX(priceTicks[i]) + 1} y="326" textAnchor="middle" fill="#f0686c">
        {value}
      </text>
    ))}
    {greeks.map((greek) => (
      <GreekRow key={greek.name} greek={greek} />
    ))}
    <g fill="#6a74ea" fillOpacity=".4" textAnchor="middle">
      <text x="279" y="345">5</text>
      <text x="279" y="354">0%</text>
    </g>

    <rect x="240.500" y="298.500" width="42" height="173" rx="4" fill="#e9f0f9" fillOpacity=".88" stroke="#6e7c90" />
    <g textAnchor="middle" fill={RED}>
      <text x="262" y="307" fill="#333">5782.74</text>
      <text x="262" y="336">-6</text>
      <text x="262" y="349">0.0%</text>
      <text x="262" y="377" fill="#2030e0">4.51</text>
      <text x="262" y="404">-0.44</text>
      <text x="262" y="432" fill="#2030e0">336.94</text>
      <text x="262" y="459">-410.59</text>
    </g>
  </ChartSvg>
);

const App = () => {
  return (
    <Page>
      <GlobalStyle />
      <TitleBar>
        <Title>OptionNET Explorer</Title>
        <Menu>
          <MenuButton>Tools</MenuButton>
          <MenuButton>Support</MenuButton>
          <Spacer />
          <MenuButton aria-label="Collapse ribbon">
            <svg width="6" height="3">
              <path d="M0 3h6L3 0z" fill="#1f2a44" />
            </svg>
          </MenuButton>
          <MenuButton aria-label="Help">
            <svg width="9" height="12">
              <path
                d="M1.500 4c0-4 6-3.500 6-.5 0 2-3 2-3 4.500M4.500 9.500v2"
                fill="none"
                stroke="#5f9fd0"
                strokeWidth="2"
              />
            </svg>
          </MenuButton>
        </Menu>
      </TitleBar>
      <RibbonBar />
      <DocumentBar>
        <LeftClip $width={273}>
          <DocumentTab>Analysis: /ES</DocumentTab>
          <DocumentTab>Analysis: NDX</DocumentTab>
          <DocumentTab>Analysis: ONON</DocumentTab>
        </LeftClip>
        <Spacer />
        <AccountButton>Account</AccountButton>
      </DocumentBar>
      <Workspace>
        <Positions>
          <PositionBar>
            <LeftClip $width={75}>Open Position (1)</LeftClip>
            <Select width={146} label="Position" value="#316 Custom" />
            <Spacer />
            <PositionTools />
          </PositionBar>
          <TablePair>
            <FactTable width={395} columns={quoteColumns} cut />
            <FactTable width={265} columns={tradeColumns} />
          </TablePair>
          <Splitter $height={9}>
            <Dots />
          </Splitter>
          <TablePair>
            <Frame $width={304} $height={199} $cut $bg="#a6bedd">
              <ExpiryTitle $columns="207px 96px">
                <span>15 nov. 24 (36)</span>
                <span>16.27%</span>
              </ExpiryTitle>
              <GridBody $cut>
                <StrikeGrid columns={leftColumns} rows={callsLeft} />
              </GridBody>
            </Frame>
            <Frame $width={356} $height={199} $bg="#a6bedd">
              <ExpiryTitle $columns="75px 198px 83px">
                <span>SPXPM</span>
                <span>15 nov. 24 (36)</span>
                <span>16.37%</span>
              </ExpiryTitle>
              <GridBody>
                <StrikeGrid columns={rightColumns} rows={callsRight} />
                <Scroll before={36} after={88} />
              </GridBody>
            </Frame>
          </TablePair>
          <Splitter>
            <Dots />
          </Splitter>
          <TablePair>
            <Frame $width={304} $height={178} $cut $bg="#a6bedd">
              <GridBody $cut>
                <StrikeGrid columns={leftColumns} rows={putsLeft} />
              </GridBody>
            </Frame>
            <Frame $width={356} $height={178} $bg="#a6bedd">
              <GridBody>
                <StrikeGrid columns={rightColumns} rows={putsRight} />
                <Scroll before={40} after={74} />
              </GridBody>
            </Frame>
          </TablePair>
          <Splitter>
            <Dots />
          </Splitter>
          <SummaryBar>
            <LeftClip $width={96}>
              <Select width={128} label="Grouping" value="Combined" />
            </LeftClip>
            <Select width={69} label="Mode" value="Auto" />
            <Spacer />
            <CheckLabel>
              <CheckBox type="checkbox" />
              Ignore Today's Trades
            </CheckLabel>
          </SummaryBar>
          <SummaryTable />
        </Positions>
        <PanelSplitter>
          <Dots vertical />
        </PanelSplitter>
        <RiskPanel>
          <TabList>
            <ChartTab $active>Risk Chart</ChartTab>
            <ChartTab>Price Chart</ChartTab>
            <ChartTab>Movement Analysis</ChartTab>
            <ChartTab>Volatility</ChartTab>
            <ChartTab>Statistics &amp; Fundamentals</ChartTab>
          </TabList>
          <RiskBar>
            <label htmlFor="vol">Vol Adjust</label>
            <Spin>
              <SpinInput id="vol" defaultValue="0" />
              <svg width="5" height="11">
                <path d="M0 3h5L2.500 0zM0 8h5L2.500 11z" fill="#6b7486" />
              </svg>
            </Spin>
            <Spacer />
            <label htmlFor="projection">Projection</label>
            <ProjectionInput id="projection" defaultValue="10/10/2024" />
          </RiskBar>
          <ChartArea>
            <RiskChart />
          </ChartArea>
          <StatusBar>
            360%
            <ZoomOut>-</ZoomOut>
          </StatusBar>
        </RiskPanel>
      </Workspace>
    </Page>
  );
};

export default App;
